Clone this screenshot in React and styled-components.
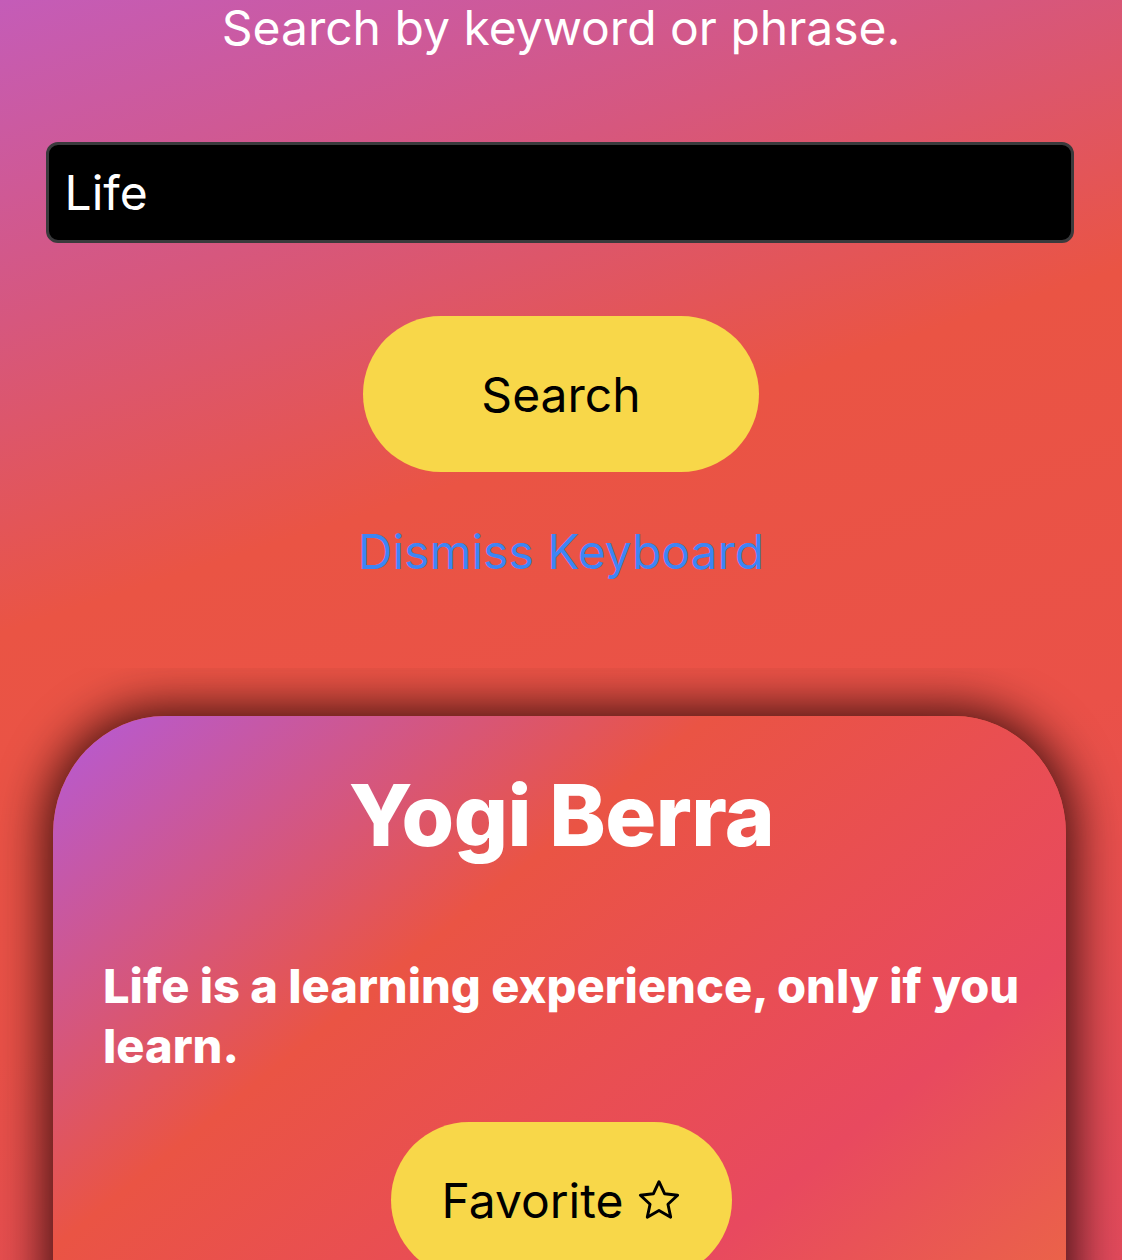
import React, { useState } from 'react';
import styled, { createGlobalStyle } from 'styled-components';

const GlobalStyle = createGlobalStyle`
  html, body {
    margin: 0;
    padding: 0;
  }
  body {
    min-height: 1260px;
    background: linear-gradient(162deg, #c45cb8 0%, #d6577e 20%, #ea5444 39%, #ea5148 65%, #e24a5c 100%);
    font-family: Inter, 'Noto Sans', sans-serif;
    overflow: hidden;
  }
`;

const Page = styled.div`
  width: 1122px;
  height: 1260px;
  display: flex;
  flex-direction: column;
  align-items: center;
  overflow: hidden;
`;

const Prompt = styled.p`
  margin: 0;
  font-size: 48px;
  line-height: 56px;
  font-weight: 400;
  color: #fff;
`;

const SearchInput = styled.input`
  box-sizing: border-box;
  width: 1028px;
  height: 101px;
  margin-top: 86px;
  margin-right: 3px;
  padding: 0 16px;
  background: #000;
  border: 3px solid #3a3a3c;
  border-radius: 12px;
  color: #fff;
  font-family: Inter, sans-serif;
  font-size: 48px;
  outline: none;
`;

const PillButton = styled.button`
  box-sizing: border-box;
  width: ${(p) => p.w}px;
  height: 156px;
  border: none;
  border-radius: 78px;
  background: #f8d749;
  color: #000;
  font-family: Inter, sans-serif;
  font-size: 48px;
  font-weight: 400;
  display: flex;
  align-items: center;
  justify-content: center;
  gap: 14px;
  flex-shrink: 0;
  cursor: pointer;
`;

const SearchRow = styled.div`
  margin-top: 73px;
`;

const LinkButton = styled.button`
  margin-top: 50px;
  background: none;
  border: none;
  padding: 0;
  color: #3d85f5;
  font-family: Inter, sans-serif;
  font-size: 48px;
  line-height: 60px;
  cursor: pointer;
`;

const CardClip = styled.div`
  align-self: stretch;
  margin-top: 86px;
  flex: 1;
  overflow: hidden;
  padding: 48px 56px 0 53px;
`;

const Card = styled.div`
  box-sizing: border-box;
  width: 1013px;
  height: 700px;
  border-radius: 112px 112px 112px 112px / 118px 118px 118px 118px;
  background: linear-gradient(141deg, #b45ad8 0%, #ea5444 35%, #e8495f 70%, #ec6f3e 100%);
  box-shadow: 0 0 48px 8px rgba(20, 0, 0, 0.8);
  display: flex;
  flex-direction: column;
  align-items: center;
  padding: 48px 46px 0 50px;
  color: #fff;
`;

const Author = styled.h2`
  margin: 0;
  font-size: 85px;
  line-height: 104px;
  font-weight: 800;
  letter-spacing: -0.5px;
`;

const Quote = styled.p`
  align-self: stretch;
  margin: 88px 0 0;
  font-size: 47px;
  line-height: 60px;
  font-weight: 800;
`;

const FavoriteRow = styled.div`
  margin-top: 46px;
`;

const Star = () => (
  <svg width="44" height="42" viewBox="0 0 24 23" fill="none" stroke="#000" strokeWidth="1.6" strokeLinejoin="round">
    <path d="M12 1.5l3.1 6.6 7.1.8-5.3 4.9 1.5 7.1L12 17.3l-6.4 3.6 1.5-7.1-5.3-4.9 7.1-.8z" />
  </svg>
);

export default function App() {
  const [query, setQuery] = useState('Life');

  return (
    <>
      <GlobalStyle />
      <Page>
        <Prompt>Search by keyword or phrase.</Prompt>
        <SearchInput value={query} onChange={(e) => setQuery(e.target.value)} />
        <SearchRow>
          <PillButton w={396}>Search</PillButton>
        </SearchRow>
        <LinkButton>Dismiss Keyboard</LinkButton>
        <CardClip>
          <Card>
            <Author>Yogi Berra</Author>
            <Quote>Life is a learning experience, only if you learn.</Quote>
            <FavoriteRow>
              <PillButton w={341}>
                Favorite <Star />
              </PillButton>
            </FavoriteRow>
          </Card>
        </CardClip>
      </Page>
    </>
  );
}
